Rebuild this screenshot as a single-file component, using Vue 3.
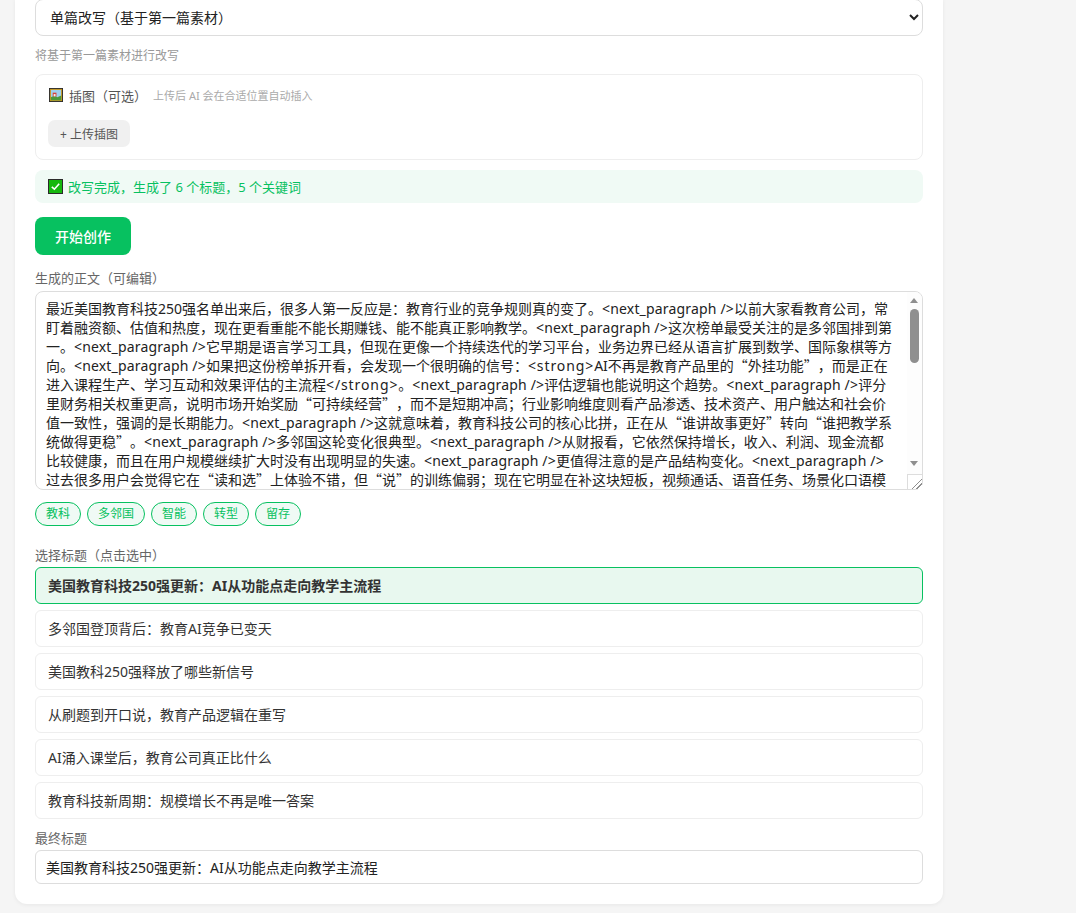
<script setup>
import { computed, onMounted, ref } from "vue"

const mode = ref("single")
const body =
  "最近美国教育科技250强名单出来后，很多人第一反应是：教育行业的竞争规则真的变了。<next_paragraph />以前大家看教育公司，常盯着融资额、估值和热度，现在更看重能不能长期赚钱、能不能真正影响教学。<next_paragraph />这次榜单最受关注的是多邻国排到第一。<next_paragraph />它早期是语言学习工具，但现在更像一个持续迭代的学习平台，业务边界已经从语言扩展到数学、国际象棋等方向。<next_paragraph />如果把这份榜单拆开看，会发现一个很明确的信号：<strong>AI不再是教育产品里的“外挂功能”，而是正在进入课程生产、学习互动和效果评估的主流程</strong>。<next_paragraph />评估逻辑也能说明这个趋势。<next_paragraph />评分里财务相关权重更高，说明市场开始奖励“可持续经营”，而不是短期冲高；行业影响维度则看产品渗透、技术资产、用户触达和社会价值一致性，强调的是长期能力。<next_paragraph />这就意味着，教育科技公司的核心比拼，正在从“谁讲故事更好”转向“谁把教学系统做得更稳”。<next_paragraph />多邻国这轮变化很典型。<next_paragraph />从财报看，它依然保持增长，收入、利润、现金流都比较健康，而且在用户规模继续扩大时没有出现明显的失速。<next_paragraph />更值得注意的是产品结构变化。<next_paragraph />过去很多用户会觉得它在“读和选”上体验不错，但“说”的训练偏弱；现在它明显在补这块短板，视频通话、语音任务、场景化口语模块都在持续加码。<next_paragraph />这也说明，AI真正的价值不是多一个功能点，而是让学习闭环跑得更顺。<next_paragraph />榜单里另一类值得看的公司，是专门服务学校和老师的平台。<next_paragraph />它们不一定有很高的大众知名度，但已经进入备课、作业、测评和家校沟通的日常环节，替换成本也因此变高。<next_paragraph />对这类公司来说，AI首先减轻的是老师的重复劳动，比如自动出题、批改反馈和学情分析，其次才是面向学生的个性化辅导。<next_paragraph />这种路径看上去不够性感，但更容易形成稳定的付费关系。<next_paragraph />再看职业教育和技能培训，变化同样明显。<next_paragraph />过去这条赛道靠证书和就业承诺吸引用户，现在企业更看重员工能不能把技能用到实际工作中，于是训练内容开始和真实任务绑定。<next_paragraph />AI模拟面试、代码陪练、销售对话演练这些产品，都在把学习结果变得更容易衡量。<next_paragraph />当然，这并不意味着所有AI教育公司都能跑出来。<next_paragraph />通用大模型的能力越来越强，只做一层简单包装的产品很快就会失去优势。<next_paragraph />真正能留下来的公司，通常同时具备三样东西：足够深的教学内容、持续积累的学习数据，以及能够嵌入用户日常习惯的产品形态。<next_paragraph />对从业者来说，这份榜单最大的启发也许不是谁排第几，而是评价标准正在变化。<next_paragraph />增长当然重要，但增长背后的留存、付费意愿和学习效果，才决定一家公司能走多远。<next_paragraph />对家长和学习者来说，选择产品时也可以少看宣传口号，多看它能不能坚持用下去、用完之后有没有真实进步。<next_paragraph />教育这门生意的周期很长，技术可以加速它，但不会改变它的底层逻辑。<next_paragraph />谁能把好内容、好技术和好体验长期放在一起，谁才更有可能留在下一份榜单上。<next_paragraph />放到更长的时间里看，这轮变化其实才刚刚开始。<next_paragraph />学校的采购节奏、家长的付费习惯和老师的使用方式都不会一夜改变，新产品需要足够的耐心才能真正走进课堂。<next_paragraph />不过方向已经比较清楚：内容会越来越个性化，反馈会越来越及时，学习过程也会越来越容易被记录和衡量。<next_paragraph />那些愿意在教学效果上下笨功夫的公司，大概率会比只追热点的公司走得更稳。<next_paragraph />下一次榜单更新时，不妨再回来看看今天这些判断，哪些成立了，哪些又被新的变化改写了。"

// 弯引号要走中文字体，否则会按西文宽度显示；标记略微放宽。只细分首屏这一段
const bodyParts = computed(() => {
  const cut = body.indexOf("这也说明")
  const parts = body
    .slice(0, cut)
    .split(/([“”]|<[^>]+>)/)
    .map((text) => {
      if (text === "“" || text === "”") return { text, kind: "quote" }
      if (text.includes("strong>")) return { text, kind: "mark strong" }
      if (text.startsWith("<")) return { text, kind: "mark" }
      return { text, kind: "" }
    })
  parts.push({ text: body.slice(cut), kind: "" })
  return parts
})
const tags = ["教科", "多邻国", "智能", "转型", "留存"]
const titles = [
  "美国教育科技250强更新：AI从功能点走向教学主流程",
  "多邻国登顶背后：教育AI竞争已变天",
  "美国教科250强释放了哪些新信号",
  "从刷题到开口说，教育产品逻辑在重写",
  "AI涌入课堂后，教育公司真正比什么",
  "教育科技新周期：规模增长不再是唯一答案",
]
const selected = ref(0)
const finalTitle = ref(titles[0])

const pick = (i) => {
  selected.value = i
  finalTitle.value = titles[i]
}

// Native scrollbars are hidden, so the thumb follows the scroll position by hand
const bodyRef = ref(null)
const thumb = ref({ top: 17, height: 50 })
const TRACK = 146

const updateThumb = () => {
  const el = bodyRef.value
  if (!el) return
  const height = Math.round((TRACK * el.clientHeight) / el.scrollHeight)
  const range = el.scrollHeight - el.clientHeight
  const top = 17 + (range > 0 ? (el.scrollTop / range) * (TRACK - height) : 0)
  thumb.value = { top, height }
}

onMounted(updateThumb)
</script>

<template>
  <div class="page">
    <div class="card">
      <select v-model="mode" class="select">
        <option value="single">单篇改写（基于第一篇素材）</option>
      </select>
      <div class="hint">将基于第一篇素材进行改写</div>

      <div class="panel">
        <div class="panel-head">
          <svg class="emoji picture" viewBox="0 0 15 15">
            <rect x="0.5" y="0.5" width="14" height="14" fill="#c8920f" stroke="#2b2b2b" />
            <rect x="2" y="2" width="11" height="11" fill="#9fd0ee" />
            <path d="M2 13 V10 L6 8 L9 10 L13 8 V13 Z" fill="#4c9a3a" />
            <rect x="4" y="5" width="4" height="4" fill="#d8423a" />
            <rect x="5" y="6.5" width="2" height="2.5" fill="#f3f3f3" />
          </svg>
          <span class="panel-title">插图（可选）</span>
          <span class="panel-note">上传后 AI 会在合适位置自动插入</span>
        </div>
        <button class="upload">+ 上传插图</button>
      </div>

      <div class="status">
        <svg class="emoji" viewBox="0 0 15 15">
          <rect x="0.5" y="0.5" width="14" height="14" fill="#16b80e" stroke="#2b2b2b" />
          <path d="M3.8 7.8 L6.4 10.2 L11.2 4.8" fill="none" stroke="#fff" stroke-width="1.6" />
        </svg>
        <span>改写完成，生成了 6 个标题，5 个关键词</span>
      </div>

      <button class="primary">开始创作</button>

      <label class="label body-label">生成的正文（可编辑）</label>
      <div class="body-wrap">
        <div
          ref="bodyRef"
          class="body"
          contenteditable="true"
          role="textbox"
          spellcheck="false"
          @scroll="updateThumb"
        ><span
            v-for="(part, i) in bodyParts"
            :key="i"
            :class="part.kind"
          >{{ part.text }}</span></div>
        <div class="scrollbar">
          <i class="arrow up"></i>
          <i class="arrow down"></i>
          <b class="thumb" :style="{ top: thumb.top + 'px', height: thumb.height + 'px' }"></b>
        </div>
      </div>

      <div class="tags">
        <span v-for="tag in tags" :key="tag" class="tag">{{ tag }}</span>
      </div>

      <label class="label pick-label">选择标题（点击选中）</label>
      <div class="titles">
        <div
          v-for="(title, i) in titles"
          :key="title"
          class="title"
          :class="{ active: i === selected }"
          @click="pick(i)"
        >
          {{ title }}
        </div>
      </div>

      <label class="label final-label">最终标题</label>
      <input v-model="finalTitle" class="final" />
    </div>
  </div>
</template>

<style scoped>
.page {
  height: 913px;
  overflow: hidden;
  box-sizing: border-box;
  background: #f5f5f5;
  padding: 0 133px 0 15px;
  font-family: "Noto Sans", "Noto Sans CJK SC", sans-serif;
  text-spacing-trim: space-all;
}

/* the page is scrolled, so the top of the card is out of view */
.card {
  margin-top: -1px;
  height: 905px;
  box-sizing: border-box;
  background: #fff;
  border-radius: 0 0 12px 12px;
  box-shadow: 0 1px 4px rgba(0, 0, 0, 0.06);
  padding: 0 20px;
  display: flex;
  flex-direction: column;
}

.select {
  height: 37px;
  border: 1px solid #ddd;
  border-radius: 8px;
  background: #fff;
  padding: 0 10px;
  font: inherit;
  font-size: 14px;
  color: #222;
}

.hint {
  margin-top: 12px;
  font-size: 12px;
  line-height: 16px;
  color: #999;
}

.panel {
  margin-top: 10px;
  height: 86px;
  box-sizing: border-box;
  border: 1px solid #eee;
  border-radius: 8px;
  padding: 11px 12px;
}

.panel-head {
  display: flex;
  align-items: center;
  height: 18px;
}

.emoji {
  width: 15px;
  height: 15px;
  flex: none;
}

.emoji.picture {
  width: 14px;
  height: 14px;
  margin-left: 1px;
}

.panel-title {
  margin-left: 6px;
  font-size: 13px;
  color: #555;
}

.panel-note {
  margin-left: 6px;
  font-size: 11px;
  color: #aaa;
}

.upload {
  display: block;
  margin-top: 16px;
  width: 82px;
  height: 27px;
  padding: 0;
  border: 0;
  border-radius: 7px;
  background: #f0f0f0;
  font: inherit;
  font-size: 12px;
  color: #555;
}

.status {
  margin-top: 10px;
  height: 33px;
  border-radius: 8px;
  background: #f0faf5;
  padding: 0 13px;
  display: flex;
  align-items: center;
  gap: 5px;
  font-size: 13px;
  color: #07c160;
}

.primary {
  margin-top: 14px;
  width: 96px;
  height: 38px;
  padding: 0;
  border: 0;
  border-radius: 8px;
  background: #07c160;
  color: #fff;
  font: inherit;
  font-size: 14px;
  font-weight: 500;
}

.label {
  font-size: 13px;
  line-height: 18px;
  color: #666;
}

.body-label {
  margin-top: 14px;
}

.body-wrap {
  position: relative;
  margin-top: 4px;
  flex: none;
}

.body {
  height: 199px;
  box-sizing: border-box;
  border: 1px solid #ddd;
  border-radius: 8px;
  padding: 7px 25px 8px 10px;
  font-size: 14px;
  line-height: 19px;
  color: #222;
  white-space: pre-wrap;
  overflow-y: scroll;
  scrollbar-width: none;
  resize: vertical;
  outline: none;
}

.quote {
  font-family: "Noto Sans CJK SC", sans-serif;
}

.mark {
  letter-spacing: 0.17px;
}

.mark.strong {
  letter-spacing: 0.9px;
}

.body::-webkit-resizer {
  background: linear-gradient(135deg, #fff 62%, #8f8f8f 62%, #8f8f8f 67%, #fff 67%, #fff 78%, #8f8f8f 78%, #8f8f8f 83%, #fff 83%);
  border-top: 1px solid #ddd;
  border-left: 1px solid #ddd;
}

.scrollbar {
  position: absolute;
  top: 1px;
  right: 1px;
  bottom: 16px;
  width: 15px;
  border-top-right-radius: 7px;
  background: #fdfdfd;
}

.arrow {
  position: absolute;
  left: 3px;
  width: 0;
  height: 0;
  border-left: 4.5px solid transparent;
  border-right: 4.5px solid transparent;
}

.arrow.up {
  top: 6px;
  border-bottom: 5px solid #8f8f8f;
}

.arrow.down {
  top: 169px;
  border-top: 5px solid #8f8f8f;
}

.thumb {
  position: absolute;
  left: 3px;
  width: 9px;
  border-radius: 5px;
  background: #8f8f8f;
}

.tags {
  margin-top: 12px;
  display: flex;
  gap: 6px;
}

.tag {
  height: 24px;
  box-sizing: border-box;
  padding: 0 10px;
  border: 1px solid #07c160;
  border-radius: 12px;
  background: #f0faf5;
  color: #07c160;
  font-size: 12px;
  line-height: 22px;
}

.pick-label {
  margin-top: 20px;
}

.titles {
  margin-top: 3px;
  display: flex;
  flex-direction: column;
  gap: 6px;
}

.title {
  height: 37px;
  box-sizing: border-box;
  border: 1px solid #eee;
  border-radius: 6px;
  padding: 0 12px;
  font-size: 14px;
  line-height: 35px;
  color: #333;
}

.title.active {
  border-color: #07c160;
  background: #e8f8ef;
  font-weight: 700;
}

.final-label {
  margin-top: 10px;
}

.final {
  margin-top: 3px;
  height: 34px;
  box-sizing: border-box;
  border: 1px solid #ddd;
  border-radius: 6px;
  padding: 0 10px;
  font: inherit;
  font-size: 14px;
  color: #222;
  outline: none;
}
</style>

<style>
html,
body {
  background: #f5f5f5;
}
</style>
